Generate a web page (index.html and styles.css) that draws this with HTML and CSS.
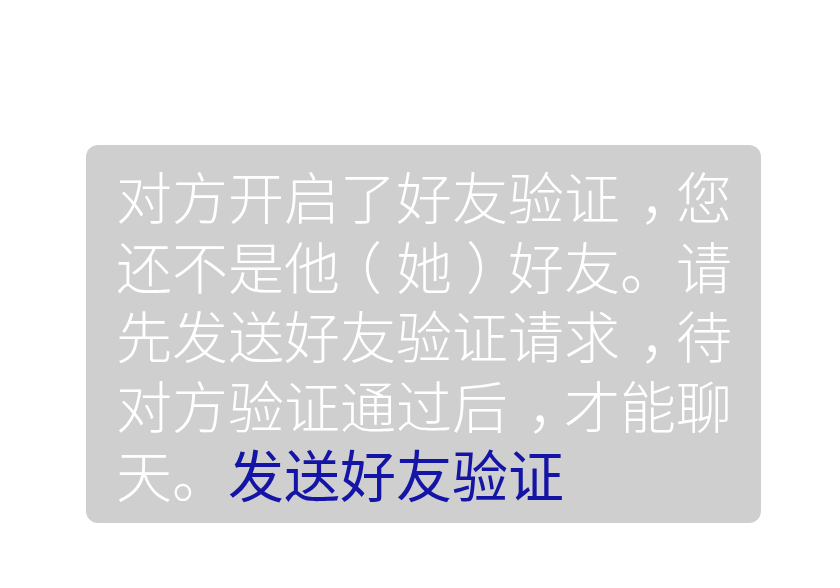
FILE: index.html
```html
<!DOCTYPE html>
<html lang="zh-CN">
<head>
<meta charset="utf-8">
<link rel="stylesheet" href="styles.css">
</head>
<body>
<div class="page">
  <div class="bubble">
    <p class="msg">对方开启了好友验证<span class="comma">，</span>您还不是他<span class="paren">（</span>她<span class="paren">）</span>好友。请先发送好友验证请求<span class="comma">，</span>待对方验证通过后<span class="comma">，</span>才能聊天。<a class="link" href="#">发送好友验证</a></p>
  </div>
</div>
</body>
</html>
```
FILE: styles.css
```css
html, body {
  margin: 0;
  padding: 0;
  background: #ffffff;
}
.page {
  padding: 145px 0 0 86px;
}
.bubble {
  width: 675px;
  height: 378px;
  box-sizing: border-box;
  background: #cfcfcf;
  border-radius: 12px;
  padding: 15px 26px 0 30px;
}
.msg {
  margin: 0;
  font-family: "Noto Sans CJK SC", "Noto Sans", sans-serif;
  font-weight: 300;
  font-size: 56px;
  line-height: 69.5px;
  color: #ffffff;
  word-break: break-all;
}
.comma {
  display: inline-block;
  box-sizing: border-box;
  width: 1em;
  padding-left: 0.2em;
  text-align: center;
  font-feature-settings: "halt" 1;
}
.paren {
  display: inline-block;
  width: 1em;
  text-align: center;
  font-feature-settings: "halt" 1;
}
.link {
  color: #1414a6;
  font-weight: 400;
  text-decoration: none;
}
```
